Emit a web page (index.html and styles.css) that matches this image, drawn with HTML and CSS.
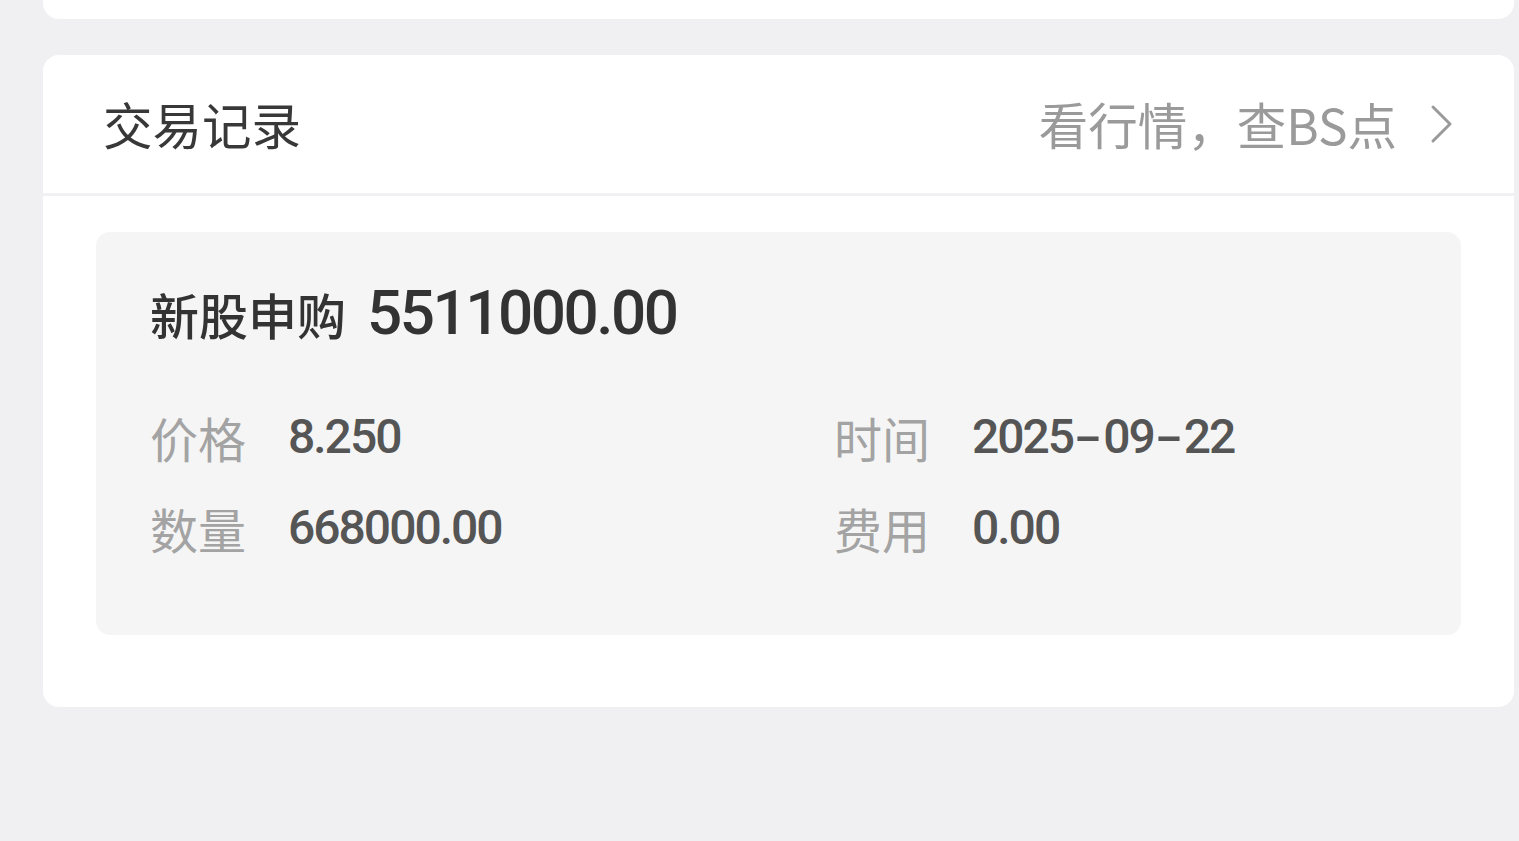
FILE: index.html
```html
<!DOCTYPE html>
<html lang="zh-CN">
<head>
<meta charset="utf-8">
<title>交易记录</title>
<link rel="stylesheet" href="styles.css">
</head>
<body>
<div class="page">
  <div class="card card-top"></div>
  <section class="card records">
    <header class="records-head">
      <h2 class="records-title">交易记录</h2>
      <a class="records-link" href="#">
        <span>看行情，查BS点</span>
        <svg class="chevron" width="24" height="40" viewBox="0 0 24 40"><polyline points="3,3 20,20 3,37" fill="none" stroke="#9a9a9a" stroke-width="3" stroke-linecap="round" stroke-linejoin="round"/></svg>
      </a>
    </header>
    <div class="records-body">
      <div class="trade">
        <div class="trade-title">
          <span class="trade-type">新股申购</span>
          <span class="trade-amount">5511000.00</span>
        </div>
        <div class="trade-grid">
          <div class="field"><span class="label">价格</span><span class="value">8.250</span></div>
          <div class="field"><span class="label">时间</span><span class="value">2025<span class="dash">-</span>09<span class="dash">-</span>22</span></div>
          <div class="field"><span class="label">数量</span><span class="value">668000.00</span></div>
          <div class="field"><span class="label">费用</span><span class="value">0.00</span></div>
        </div>
      </div>
    </div>
  </section>
</div>
</body>
</html>
```
FILE: styles.css
```css
html, body {
  margin: 0;
  padding: 0;
  background: #f0f0f2;
}
body {
  font-family: "Noto Sans CJK SC", "Noto Sans", sans-serif;
  width: 1519px;
  height: 841px;
  overflow: hidden;
}
.page {
  padding: 0 5px 0 43px;
}
.card {
  background: #ffffff;
  border-radius: 16px;
}
.card-top {
  height: 19px;
  border-top-left-radius: 0;
  border-top-right-radius: 0;
  margin-bottom: 36px;
}
.records {
  height: 652px;
}
.records-head {
  height: 138px;
  padding: 0 60px 0 60px;
  display: flex;
  align-items: center;
  justify-content: space-between;
  border-bottom: 3px solid #f1f1f3;
}
.records-title {
  margin: 0;
  font-size: 49.5px;
  font-weight: 400;
  color: #383838;
  line-height: 1;
}
.records-link {
  display: flex;
  align-items: center;
  gap: 33px;
  text-decoration: none;
  color: #9a9a9a;
  font-size: 49.5px;
  line-height: 1;
}
.chevron {
  display: block;
}
.records-body {
  padding: 36px 53px 0 53px;
}
.trade {
  background: #f5f5f5;
  border-radius: 14px;
  padding: 50px 54px 77px 54px;
}
.trade-title {
  display: flex;
  align-items: center;
  gap: 21px;
  height: 62px;
}
.trade-type {
  font-size: 49px;
  font-weight: 500;
  color: #333333;
  line-height: 1;
}
.trade-amount {
  font-family: Roboto, "Liberation Sans", sans-serif;
  font-size: 62px;
  font-weight: 500;
  letter-spacing: -2.5px;
  color: #333333;
  line-height: 1;
}
.trade-grid {
  margin-top: 63px;
  display: grid;
  grid-template-columns: 684px 1fr;
  row-gap: 31px;
}
.field {
  display: flex;
  align-items: center;
  height: 60px;
}
.label {
  width: 138px;
  font-size: 48px;
  color: #a3a3a3;
  line-height: 1;
}
.value {
  font-family: Roboto, "Liberation Sans", sans-serif;
  font-size: 48px;
  font-weight: 500;
  letter-spacing: -2px;
  color: #555555;
  line-height: 1;
}
.dash {
  display: inline-block;
  width: 30px;
  text-align: center;
  letter-spacing: 0;
  transform: scaleX(1.7);
}
```
